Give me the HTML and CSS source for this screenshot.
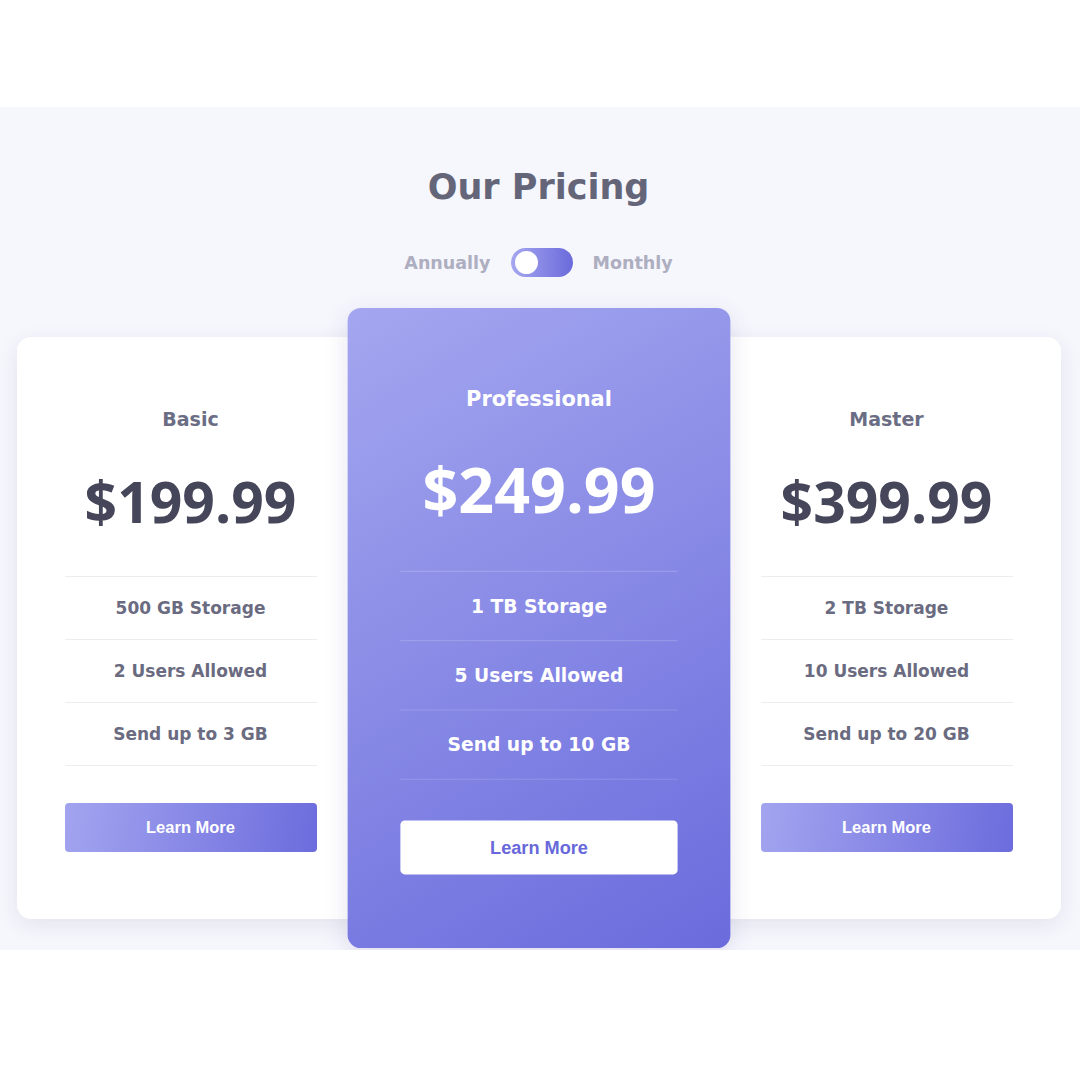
FILE: index.html
```html
<!DOCTYPE html>
<html lang="en">
<head>
<meta charset="utf-8">
<title>Our Pricing</title>
<link rel="stylesheet" href="styles.css">
</head>
<body>
<div class="top-space"></div>
<section class="pricing">
  <h2 class="title">Our Pricing</h2>
  <div class="toggle-row">
    <span class="toggle-label">Annually</span>
    <span class="switch"><span class="knob"></span></span>
    <span class="toggle-label">Monthly</span>
  </div>
  <div class="cards">
    <div class="card">
      <h3 class="plan">Basic</h3>
      <div class="price">$199.99</div>
      <ul class="features">
        <li>500 GB Storage</li>
        <li>2 Users Allowed</li>
        <li>Send up to 3 GB</li>
      </ul>
      <a class="btn" href="#">Learn More</a>
    </div>
    <div class="card featured">
      <h3 class="plan">Professional</h3>
      <div class="price">$249.99</div>
      <ul class="features">
        <li>1 TB Storage</li>
        <li>5 Users Allowed</li>
        <li>Send up to 10 GB</li>
      </ul>
      <a class="btn" href="#">Learn More</a>
    </div>
    <div class="card">
      <h3 class="plan">Master</h3>
      <div class="price">$399.99</div>
      <ul class="features">
        <li>2 TB Storage</li>
        <li>10 Users Allowed</li>
        <li>Send up to 20 GB</li>
      </ul>
      <a class="btn" href="#">Learn More</a>
    </div>
  </div>
</section>
</body>
</html>
```
FILE: styles.css
```css
* { box-sizing: border-box; }

body {
  margin: 0;
  background: #ffffff;
  font-family: "DejaVu Sans", "Open Sans", sans-serif;
}

.top-space { height: 107px; }

.pricing {
  background: #f6f6fd;
  padding: 59px 3px 31px 0;
}

.title {
  margin: 0;
  text-align: center;
  font-size: 35px;
  line-height: 42px;
  font-weight: 700;
  color: #646579;
}

.toggle-row {
  margin-top: 40px;
  display: flex;
  justify-content: center;
  align-items: center;
  gap: 20px;
}

.toggle-label {
  font-size: 17.5px;
  font-weight: 700;
  color: #adaebf;
}

.switch {
  width: 62px;
  height: 29px;
  border-radius: 15px;
  background: linear-gradient(90deg, #a6a7f0, #6a6adb);
  display: flex;
  align-items: center;
  padding-left: 4px;
}

.knob {
  width: 23px;
  height: 23px;
  border-radius: 50%;
  background: #ffffff;
}

.cards {
  margin-top: 60px;
  display: flex;
  justify-content: center;
}

.card {
  width: 348px;
  background: #ffffff;
  border-radius: 14px;
  padding: 70px 48px 67px;
  text-align: center;
  box-shadow: 0 6px 22px rgba(40, 40, 80, 0.09);
}

.plan {
  margin: 0;
  font-size: 19px;
  line-height: 24px;
  font-weight: 700;
  color: #6b6d84;
}

.price {
  margin: 35px 0 40px;
  font-family: "Open Sans", sans-serif;
  font-size: 57px;
  line-height: 70px;
  font-weight: 700;
  color: #45465a;
}

.features {
  list-style: none;
  margin: 0;
  padding: 0;
  border-top: 1px solid #ececf1;
}

.features li {
  height: 63px;
  line-height: 62px;
  border-bottom: 1px solid #ececf1;
  font-size: 17px;
  font-weight: 700;
  color: #6a6b80;
}

.btn {
  display: block;
  margin-top: 37px;
  height: 49px;
  line-height: 49px;
  border-radius: 4px;
  background: linear-gradient(100deg, #a3a4ef, #6c6cdd);
  color: #ffffff;
  text-decoration: none;
  font-family: "Liberation Sans", Arial, sans-serif;
  font-size: 16.5px;
  font-weight: 700;
}

.featured {
  transform: scale(1.1);
  z-index: 2;
  border-radius: 12px;
  background: linear-gradient(150deg, #a4a6f0 0%, #8a8ce6 45%, #6b6bdd 100%);
  box-shadow: 0 6px 22px rgba(60, 60, 140, 0.12);
}

.featured .plan,
.featured .price,
.featured .features li {
  color: #ffffff;
}

.featured .features {
  border-top-color: rgba(255, 255, 255, 0.16);
}

.featured .features li {
  border-bottom-color: rgba(255, 255, 255, 0.16);
}

.featured .btn {
  background: #ffffff;
  color: #6868da;
}
```
